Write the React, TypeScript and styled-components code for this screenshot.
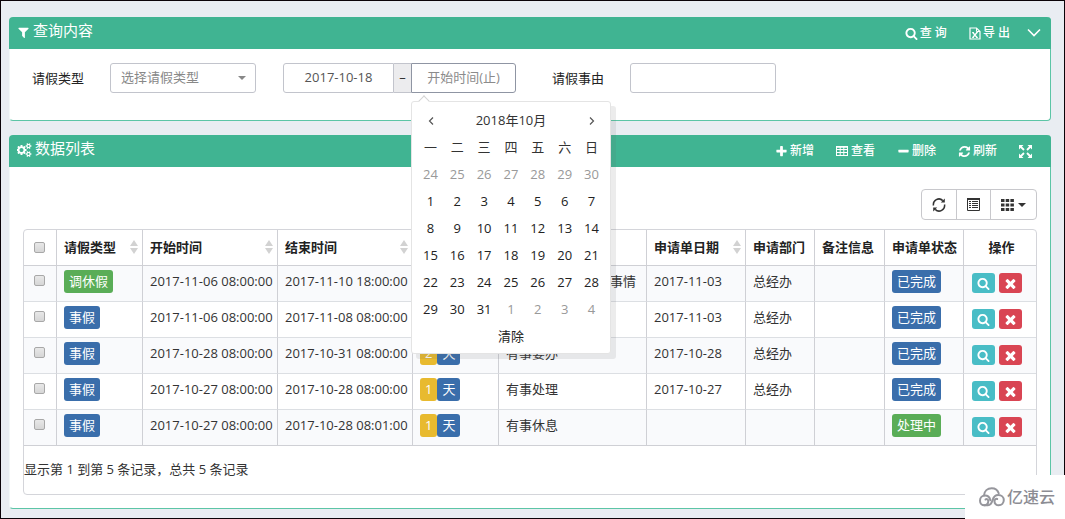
import React from "react";
import styled, { createGlobalStyle, css } from "styled-components";

const FONT = '"Open Sans", "Noto Sans CJK SC", sans-serif';

const GlobalStyle = createGlobalStyle`
  *, *::before, *::after { box-sizing: border-box; }
  body {
    margin: 0;
    background: #e9edf2;
    color: #333;
    font-family: ${FONT};
    font-size: 13px;
    line-height: 20px;
  }
  button, input, select { font: inherit; color: inherit; margin: 0; }
  button { cursor: pointer; }
`;

/* ---------- icons ---------- */

const Glyph = ({ d, box = "0 0 1792 1792", w = 13, h = 13 }: { d: string; box?: string; w?: number; h?: number }) => (
  <svg width={w} height={h} viewBox={box} fill="currentColor" aria-hidden="true">
    <path d={d} />
  </svg>
);

const paths = {
  filter:
    "M1595 295q17 41-14 70l-493 493v742q0 42-39 59-13 5-25 5-27 0-45-19l-256-256q-19-19-19-45v-486l-493-493q-31-29-14-70 17-39 59-39h1280q42 0 59 39z",
  search:
    "M1216 832q0-185-131.5-316.5t-316.5-131.5-316.5 131.5-131.5 316.5 131.5 316.5 316.5 131.5 316.5-131.5 131.5-316.5zm512 832q0 52-38 90t-90 38q-54 0-90-38l-343-342q-179 124-399 124-143 0-273.5-55.5t-225-150-150-225-55.5-273.5 55.5-273.5 150-225 225-150 273.5-55.5 273.5 55.5 225 150 150 225 55.5 273.5q0 220-124 399l343 343q37 37 37 90z",
  plus:
    "M1600 736v192q0 40-28 68t-68 28h-416v416q0 40-28 68t-68 28h-192q-40 0-68-28t-28-68v-416h-416q-40 0-68-28t-28-68v-192q0-40 28-68t68-28h416v-416q0-40 28-68t68-28h192q40 0 68 28t28 68v416h416q40 0 68 28t28 68z",
  minus:
    "M1600 736v192q0 40-28 68t-68 28h-1216q-40 0-68-28t-28-68v-192q0-40 28-68t68-28h1216q40 0 68 28t28 68z",
  times:
    "M1490 1322q0 40-28 68l-136 136q-28 28-68 28t-68-28l-294-294-294 294q-28 28-68 28t-68-28l-136-136q-28-28-28-68t28-68l294-294-294-294q-28-28-28-68t28-68l136-136q28-28 68-28t68 28l294 294 294-294q28-28 68-28t68 28l136 136q28 28 28 68t-28 68l-294 294 294 294q28 28 28 68z",
  refresh:
    "M1639 1056q0 5-1 7-64 268-268 434.5t-478 166.5q-146 0-282.5-55t-243.5-157l-129 129q-19 19-45 19t-45-19-19-45v-448q0-26 19-45t45-19h448q26 0 45 19t19 45-19 45l-137 137q71 66 161 102t187 36q134 0 250-65t186-179q11-17 53-117 8-23 30-23h192q13 0 22.5 9.5t9.5 22.5zm25-800v448q0 26-19 45t-45 19h-448q-26 0-45-19t-19-45 19-45l138-138q-148-137-349-137-134 0-250 65t-186 179q-11 17-53 117-8 23-30 23h-199q-13 0-22.5-9.5t-9.5-22.5v-7q65-268 270-434.5t480-166.5q146 0 284 55.5t245 156.5l130-129q19-19 45-19t45 19 19 45z",
  cogs:
    "M832 896q0-106-75-181t-181-75-181 75-75 181 75 181 181 75 181-75 75-181zm768 512q0-52-38-90t-90-38-90 38-38 90q0 53 37.5 90.5t90.5 37.5 90.5-37.5 37.5-90.5zm0-1024q0-52-38-90t-90-38-90 38-38 90q0 53 37.5 90.5t90.5 37.5 90.5-37.5 37.5-90.5zm-384 421v185q0 10-7 19.5t-16 10.5l-155 24q-11 35-32 76 34 48 90 115 7 11 7 20 0 12-7 19-23 30-82.5 89.5t-78.5 59.5q-11 0-21-7l-115-90q-37 19-77 31-11 108-23 155-7 24-30 24h-186q-11 0-20-7.5t-10-17.5l-23-153q-34-10-75-31l-118 89q-7 7-20 7-11 0-21-8-144-133-144-160 0-9 7-19 10-14 41-53t47-61q-23-44-35-82l-152-24q-10-1-17-9.5t-7-19.5v-185q0-10 7-19.5t16-10.5l155-24q11-35 32-76-34-48-90-115-7-11-7-20 0-12 7-20 22-30 82-89t79-59q11 0 21 7l115 90q34-18 77-32 11-108 23-154 7-24 30-24h186q11 0 20 7.5t10 17.5l23 153q34 10 75 31l118-89q8-7 20-7 11 0 21 8 144 133 144 160 0 8-7 19-12 16-42 54t-45 60q23 48 34 82l152 23q10 2 17 10.5t7 19.5zm640 533v140q0 16-149 31-12 27-30 52 51 113 51 138 0 4-4 7-122 71-124 71-8 0-46-47t-52-68q-20 2-30 2t-30-2q-14 21-52 68t-46 47q-2 0-124-71-4-3-4-7 0-25 51-138-18-25-30-52-149-15-149-31v-140q0-16 149-31 13-29 30-52-51-113-51-138 0-4 4-7 4-2 35-20t59-34 30-16q8 0 46 46.5t52 67.5q20-2 30-2t30 2q51-71 92-112l6-2q4 0 124 70 4 3 4 7 0 25-51 138 17 23 30 52 149 15 149 31zm0-1024v140q0 16-149 31-12 27-30 52 51 113 51 138 0 4-4 7-122 71-124 71-8 0-46-47t-52-68q-20 2-30 2t-30-2q-14 21-52 68t-46 47q-2 0-124-71-4-3-4-7 0-25 51-138-18-25-30-52-149-15-149-31v-140q0-16 149-31 13-29 30-52-51-113-51-138 0-4 4-7 4-2 35-20t59-34 30-16q8 0 46 46.5t52 67.5q20-2 30-2t30 2q51-71 92-112l6-2q4 0 124 70 4 3 4 7 0 25-51 138 17 23 30 52 149 15 149 31z",
};

const ExcelIcon = () => (
  <svg width="12" height="13" viewBox="0 0 12 13" fill="none" stroke="currentColor" aria-hidden="true">
    <path d="M1 1h6.5L11 4.500V12H1z" strokeWidth="1.200" />
    <path d="M7.500 1v3.500H11" />
    <path d="M3.800 5.500l4.200 5M8 5.500l-4.200 5" strokeWidth="1.300" />
    <path d="M3 5.500h2M7 5.500h2M3 10.500h2M7 10.500h2" strokeWidth="0.800" />
  </svg>
);

const GridIcon = () => (
  <svg width="13" height="12" viewBox="0 0 13 12" fill="none" stroke="currentColor" aria-hidden="true">
    <rect x="0.500" y="1.500" width="11" height="9" />
    <path d="M0 2h12" strokeWidth="1.500" />
    <path d="M0 4.500h12M0 7.500h12M4.200 1v10M7.800 1v10" />
  </svg>
);

const ChevronIcon = () => (
  <svg width="14" height="12" viewBox="0 0 14 12" fill="none" stroke="currentColor" strokeWidth="1.600" aria-hidden="true">
    <path d="M1 2.500l6 6 6-6" />
  </svg>
);

const ExpandIcon = () => (
  <svg width="13" height="13" viewBox="0 0 13 13" fill="currentColor" stroke="currentColor" aria-hidden="true">
    <path
      stroke="none"
      d="M0 0h4.500L0 4.500zM13 0H8.500L13 4.500zM0 13h4.500L0 8.500zM13 13H8.500L13 8.500z"
    />
    <path strokeWidth="1.800" d="M1.500 1.500L5 5M11.500 1.500L8 5M1.500 11.500L5 8M11.500 11.500L8 8" />
  </svg>
);

const SyncIcon = () => (
  <svg width="14" height="14" viewBox="0 0 14 14" fill="none" stroke="currentColor" strokeWidth="1.500" aria-hidden="true">
    <path d="M1.500 7.500A5.500 5.500 0 0 1 10.800 2.600" />
    <path d="M12.500 6.500A5.500 5.500 0 0 1 3.200 11.400" />
    <path d="M12.800 0.500V4.500H8.800zM1.200 13.500V9.500H5.200z" fill="currentColor" stroke="none" />
  </svg>
);

const ListIcon = () => (
  <svg width="13" height="13" viewBox="0 0 13 13" fill="none" stroke="currentColor" aria-hidden="true">
    <path d="M0.500 0.500h12v12H0.500z" />
    <path d="M0 1h13" strokeWidth="2" />
    <path d="M2 3.500h2M5 3.500H11M2 5.500h2M5 5.500H11M2 7.500h2M5 7.500H11M2 9.500h2M5 9.500H11" />
  </svg>
);

const TilesIcon = () => (
  <svg width="13" height="12" viewBox="0 0 13 12" fill="currentColor" aria-hidden="true">
    <path d="M0 0h3.500v3H0zM4.700 0h3.500v3H4.700zM9.400 0h3.500v3H9.400zM0 4.500h3.500v3H0zM4.700 4.500h3.500v3H4.700zM9.400 4.500h3.500v3H9.400zM0 9h3.500v3H0zM4.700 9h3.500v3H4.700zM9.400 9h3.500v3H9.400z" />
  </svg>
);

const CaretIcon = () => (
  <svg width="8" height="4" viewBox="0 0 8 4" fill="currentColor" aria-hidden="true">
    <path d="M0 0h8L4 4z" />
  </svg>
);

const SortIcon = () => (
  <svg width="8" height="14" viewBox="0 0 8 14" fill="#d2d2d2" aria-hidden="true">
    <path d="M0 6h8L4 0zM0 8h8l-4 6z" />
  </svg>
);

const ArrowIcon = ({ flip }: { flip?: boolean }) => (
  <svg width="6" height="8" viewBox="0 0 6 8" fill="none" stroke="#555" strokeWidth="1.200" aria-hidden="true">
    <path d={flip ? "M1 0.500L4.500 4 1 7.500" : "M5 0.500L1.500 4 5 7.500"} />
  </svg>
);

const CloudLogo = () => (
  <svg width="26" height="20" viewBox="0 0 26 20" fill="none" stroke="#96969c" strokeWidth="2" strokeLinecap="round" aria-hidden="true">
    <path d="M5 8.500C5.300 4 8.500 1.200 12.700 1.200c3.300 0 6 1.800 7 5" />
    <path d="M6.500 12.500c1.200-1 3 0 2.800 1.900-.2 2.200-1.900 3.900-4 3.900C2.900 18.300 1 16.300 1 13.700c0-3 2.200-5.100 5-5.100 3.200 0 4.800 2.200 5.400 4.700" />
    <path d="M5.300 18.300H9c2.900 0 3.700-2 4.600-5.200.9-3.300 2.700-5.200 5.700-5.200 3.100 0 5.500 2.300 5.500 5.200 0 3-2.200 5.200-5.100 5.200-2.400 0-4.200-1.700-4.200-3.900 0-2 1.400-3 2.700-2.400" />
  </svg>
);

/* ---------- layout ---------- */

const Page = styled.main`
  border: 1px solid #0b0308;
  padding: 16px 13px 9px 8px;
  display: flex;
  flex-direction: column;
  gap: 14px;
`;

const Panel = styled.section`
  background: #fff;
  border: 1px solid #5cc5a6;
  border-top: 0;
  border-left-color: #f3f8f8;
  border-radius: 4px;
`;

const PanelHeader = styled.header<{ $end: number }>`
  display: flex;
  justify-content: space-between;
  height: 32px;
  margin: 0 -1px;
  padding: 0 ${(p) => p.$end}px 0 8px;
  background: #40b492;
  color: #fff;
  border-radius: 4px 4px 0 0;
`;

const Title = styled.h2`
  display: flex;
  align-items: center;
  gap: 3px;
  height: 26px;
  margin: 0;
  font-size: 15px;
  font-weight: 400;
  svg { margin-top: 4px; }
`;

const Tools = styled.nav`
  display: flex;
  align-items: center;
`;

const Tool = styled.button<{ $pad?: number }>`
  display: flex;
  align-items: center;
  gap: 2px;
  padding: 0 ${(p) => p.$pad ?? 11}px;
  border: 0;
  background: none;
  font-size: 12px;
  font-weight: 500;
`;

const QueryForm = styled.form`
  display: flex;
  flex-wrap: wrap;
  padding: 14px 22px 27px;
`;

const Field = styled.div<{ $gap: number }>`
  display: flex;
  align-items: center;
  margin-right: ${(p) => p.$gap}px;
`;

const Label = styled.label`
  width: 78px;
  color: #222;
`;

const control = css`
  height: 30px;
  border: 1px solid #c2c4cc;
  border-radius: 3px;
  background: #fff;
  outline: 0;
  &::placeholder { color: #8b8b8b; opacity: 1; }
`;

const SelectBox = styled.span`
  position: relative;
  display: block;
  color: #888;
  svg {
    position: absolute;
    right: 10px;
    top: 13px;
    pointer-events: none;
  }
`;

const Select = styled.select`
  ${control}
  display: block;
  width: 146px;
  padding: 0 10px 2px;
  appearance: none;
`;

const TextInput = styled.input`
  ${control}
  width: 146px;
  padding: 0 10px;
`;

const DateRange = styled.div`
  display: flex;
  margin-right: 36px;
`;

const DateInput = styled.input<{ $last?: boolean }>`
  ${control}
  width: ${(p) => (p.$last ? 105 : 111)}px;
  padding: 0 0 2px;
  text-align: center;
  color: #555;
  border-color: ${(p) => (p.$last ? "#8f95a3" : "#c2c4cc")};
  border-radius: ${(p) => (p.$last ? "0 3px 3px 0" : "3px 0 0 3px")};
`;

const Addon = styled.span`
  width: 17px;
  border: 1px solid #c2c4cc;
  border-width: 1px 0;
  background: #ececee;
  text-align: center;
  line-height: 26px;
`;

const EndDate = styled.div`
  position: relative;
`;

/* ---------- calendar ---------- */

const Calendar = styled.div`
  position: absolute;
  z-index: 10;
  top: 38px;
  left: 0;
  width: 200px;
  padding: 4px 5px;
  background: #fff;
  border: 1px solid #e4e4e4;
  border-radius: 3px;
  box-shadow: 5px 5px rgba(102, 102, 102, 0.12);
  &::before {
    content: "";
    position: absolute;
    top: -5px;
    left: 8px;
    width: 8px;
    height: 8px;
    background: #fff;
    border: 1px solid #d4d4d4;
    border-width: 1px 0 0 1px;
    transform: rotate(45deg);
  }
`;

const MonthBar = styled.div`
  display: grid;
  grid-template-columns: 27px 1fr 27px;
  height: 27px;
  text-align: center;
  line-height: 28px;
`;

const Days = styled.table`
  width: 100%;
  border-collapse: collapse;
  table-layout: fixed;
  th {
    height: 27px;
    padding: 0;
    font-weight: 400;
  }
  td { padding: 0; }
`;

const PlainButton = styled.button<{ $muted?: boolean }>`
  display: block;
  width: 100%;
  height: 27px;
  padding: 0;
  border: 0;
  background: none;
  color: ${(p) => (p.$muted ? "#999" : "#222")};
`;

/* ---------- list ---------- */

const ListBody = styled.div`
  padding: 22px 13px 13px;
`;

const ButtonGroup = styled.div`
  display: flex;
  width: fit-content;
  margin: 0 0 9px auto;
  border: 1px solid #c8c8cc;
  border-radius: 4px;
`;

const GroupButton = styled.button`
  display: flex;
  align-items: center;
  gap: 4px;
  height: 29px;
  padding: 0 10px;
  border: 0;
  border-left: 1px solid #c8c8cc;
  background: none;
  &:first-child { border-left: 0; }
`;

const TableFrame = styled.div`
  border: 1px solid #d4d5da;
  border-radius: 4px;
`;

const Table = styled.table`
  width: 100%;
  border-collapse: separate;
  border-spacing: 0;
  table-layout: fixed;
  th, td {
    height: 36px;
    padding: 4px 0 0 7px;
    border-right: 1px solid #cfd0d5;
    border-bottom: 1px solid #dcdfe3;
    text-align: left;
    vertical-align: top;
    white-space: nowrap;
    line-height: 23px;
  }
  th {
    padding: 0 4px 1px 7px;
    vertical-align: middle;
    color: #222;
    border-bottom-color: #cfd0d5;
  }
  th:last-child, td:last-child { border-right: 0; }
  th:last-child { text-align: center; }
  tbody tr:nth-child(odd) { background: #f9fafc; }
  tbody tr:last-child td { border-bottom-color: #cfd0d5; }
`;

const HeadCell = styled.span`
  display: flex;
  align-items: center;
  justify-content: space-between;
`;

const Check = styled.input`
  appearance: none;
  display: block;
  width: 11px;
  height: 11px;
  margin: 5px 0 0 3px;
  border: 1px solid #a8a8a8;
  border-radius: 2px;
  background: linear-gradient(#e8e8e8, #d6d6d6);
  th & { margin-top: 0; }
`;

const tones = { green: "#5aad57", blue: "#3a6eab", yellow: "#e8ba2f" };

const Badge = styled.span<{ $tone: keyof typeof tones }>`
  display: inline-block;
  height: 23px;
  padding: 0 5px;
  border-radius: 3px;
  background: ${(p) => tones[p.$tone]};
  color: #fff;
  vertical-align: top;
`;

const Actions = styled.div`
  display: flex;
  gap: 4px;
  padding: 3px 0 0 1px;
`;

const ActionButton = styled.button<{ $danger?: boolean }>`
  display: flex;
  align-items: center;
  justify-content: center;
  width: 23px;
  height: 20px;
  padding: 0;
  border: 0;
  border-radius: 3px;
  background: ${(p) => (p.$danger ? "#d94553" : "#49bdc6")};
  color: #fff;
`;

const Summary = styled.p`
  height: 48px;
  margin: 0;
  line-height: 46px;
`;

const Watermark = styled.aside`
  position: absolute;
  z-index: 20;
  right: 0;
  top: 475px;
  display: flex;
  align-items: center;
  gap: 2px;
  width: 100px;
  height: 44px;
  padding-left: 14px;
  background: #fff;
  color: #8c8c93;
  font-size: 16px;
  font-weight: 500;
`;

/* ---------- data ---------- */

const columns: { name: string; width?: number; sort?: boolean }[] = [
  { name: "请假类型", width: 86, sort: true },
  { name: "开始时间", width: 135, sort: true },
  { name: "结束时间", width: 135, sort: true },
  { name: "请假天数", width: 86 },
  { name: "请假事由" },
  { name: "申请单日期", width: 99, sort: true },
  { name: "申请部门", width: 69 },
  { name: "备注信息", width: 70 },
  { name: "申请单状态", width: 79 },
  { name: "操作", width: 72 },
];

const rows = [
  { type: "调休假", start: "2017-11-06 08:00:00", end: "2017-11-10 18:00:00", days: 5, reason: "家里有事需要处理事情", date: "2017-11-03", dept: "总经办", status: "已完成" },
  { type: "事假", start: "2017-11-06 08:00:00", end: "2017-11-08 08:00:00", days: 2, reason: "有事", date: "2017-11-03", dept: "总经办", status: "已完成" },
  { type: "事假", start: "2017-10-28 08:00:00", end: "2017-10-31 08:00:00", days: 2, reason: "有事要办", date: "2017-10-28", dept: "总经办", status: "已完成" },
  { type: "事假", start: "2017-10-27 08:00:00", end: "2017-10-28 08:00:00", days: 1, reason: "有事处理", date: "2017-10-27", dept: "总经办", status: "已完成" },
  { type: "事假", start: "2017-10-27 08:00:00", end: "2017-10-28 08:01:00", days: 1, reason: "有事休息", date: "", dept: "", status: "处理中" },
];

const weekdays = ["一", "二", "三", "四", "五", "六", "日"];

// Six weeks, starting on the 24th of the month before.
const weeks = Array.from({ length: 6 }, (_, w) =>
  Array.from({ length: 7 }, (_, d) => {
    const n = w * 7 + d - 6;
    if (n < 1) return { day: n + 30, muted: true };
    if (n > 31) return { day: n - 31, muted: true };
    return { day: n, muted: false };
  })
);

const DatePicker = () => (
  <Calendar>
    <MonthBar>
      <PlainButton type="button" aria-label="上个月"><ArrowIcon /></PlainButton>
      <span>2018年10月</span>
      <PlainButton type="button" aria-label="下个月"><ArrowIcon flip /></PlainButton>
    </MonthBar>
    <Days>
      <thead>
        <tr>{weekdays.map((d) => <th key={d}>{d}</th>)}</tr>
      </thead>
      <tbody>
        {weeks.map((week, i) => (
          <tr key={i}>
            {week.map((c) => (
              <td key={c.day}>
                <PlainButton type="button" $muted={c.muted}>{c.day}</PlainButton>
              </td>
            ))}
          </tr>
        ))}
      </tbody>
    </Days>
    <PlainButton type="button">清除</PlainButton>
  </Calendar>
);

export default function App() {
  return (
    <>
      <GlobalStyle />
      <Page>
        <Panel>
          <PanelHeader $end={4}>
            <Title><Glyph d={paths.filter} /> 查询内容</Title>
            <Tools>
              <Tool type="button"><Glyph d={paths.search} />查 询</Tool>
              <Tool type="button"><ExcelIcon />导 出</Tool>
              <Tool type="button" $pad={6} aria-label="收起"><ChevronIcon /></Tool>
            </Tools>
          </PanelHeader>
          <QueryForm>
            <Field $gap={27}>
              <Label htmlFor="type">请假类型</Label>
              <SelectBox>
                <Select id="type" defaultValue="">
                  <option value="">选择请假类型</option>
                  <option>事假</option>
                  <option>调休假</option>
                </Select>
                <CaretIcon />
              </SelectBox>
            </Field>
            <DateRange>
              <DateInput aria-label="开始时间(起)" defaultValue="2017-10-18" />
              <Addon>–</Addon>
              <EndDate>
                <DateInput $last aria-label="开始时间(止)" placeholder="开始时间(止)" />
                <DatePicker />
              </EndDate>
            </DateRange>
            <Field $gap={0}>
              <Label htmlFor="reason">请假事由</Label>
              <TextInput id="reason" />
            </Field>
          </QueryForm>
        </Panel>

        <Panel>
          <PanelHeader $end={8}>
            <Title><Glyph d={paths.cogs} box="0 0 1920 1792" w={15} h={14} /> 数据列表</Title>
            <Tools>
              <Tool type="button"><Glyph d={paths.plus} />新增</Tool>
              <Tool type="button"><GridIcon />查看</Tool>
              <Tool type="button"><Glyph d={paths.minus} />删除</Tool>
              <Tool type="button"><Glyph d={paths.refresh} />刷新</Tool>
              <Tool type="button" aria-label="全屏"><ExpandIcon /></Tool>
            </Tools>
          </PanelHeader>
          <ListBody>
            <ButtonGroup>
              <GroupButton type="button" aria-label="刷新"><SyncIcon /></GroupButton>
              <GroupButton type="button" aria-label="切换视图"><ListIcon /></GroupButton>
              <GroupButton type="button" aria-label="选择列"><TilesIcon /><CaretIcon /></GroupButton>
            </ButtonGroup>
            <TableFrame>
              <Table>
                <colgroup>
                  <col width={33} />
                  {columns.map((c) => <col key={c.name} width={c.width} />)}
                </colgroup>
                <thead>
                  <tr>
                    <th><Check type="checkbox" aria-label="全选" /></th>
                    {columns.map((c) => (
                      <th key={c.name}>{c.sort ? <HeadCell>{c.name}<SortIcon /></HeadCell> : c.name}</th>
                    ))}
                  </tr>
                </thead>
                <tbody>
                  {rows.map((r, i) => (
                    <tr key={i}>
                      <td><Check type="checkbox" aria-label={`选择第 ${i + 1} 行`} /></td>
                      <td><Badge $tone={r.type === "事假" ? "blue" : "green"}>{r.type}</Badge></td>
                      <td>{r.start}</td>
                      <td>{r.end}</td>
                      <td><Badge $tone="yellow">{r.days}</Badge><Badge $tone="blue">天</Badge></td>
                      <td>{r.reason}</td>
                      <td>{r.date}</td>
                      <td>{r.dept}</td>
                      <td />
                      <td><Badge $tone={r.status === "已完成" ? "blue" : "green"}>{r.status}</Badge></td>
                      <td>
                        <Actions>
                          <ActionButton type="button" aria-label="查看"><Glyph d={paths.search} /></ActionButton>
                          <ActionButton type="button" $danger aria-label="删除"><Glyph d={paths.times} w={15} h={15} /></ActionButton>
                        </Actions>
                      </td>
                    </tr>
                  ))}
                </tbody>
              </Table>
              <Summary>显示第 1 到第 5 条记录，总共 5 条记录</Summary>
            </TableFrame>
          </ListBody>
        </Panel>
      </Page>
      <Watermark><CloudLogo />亿速云</Watermark>
    </>
  );
}
